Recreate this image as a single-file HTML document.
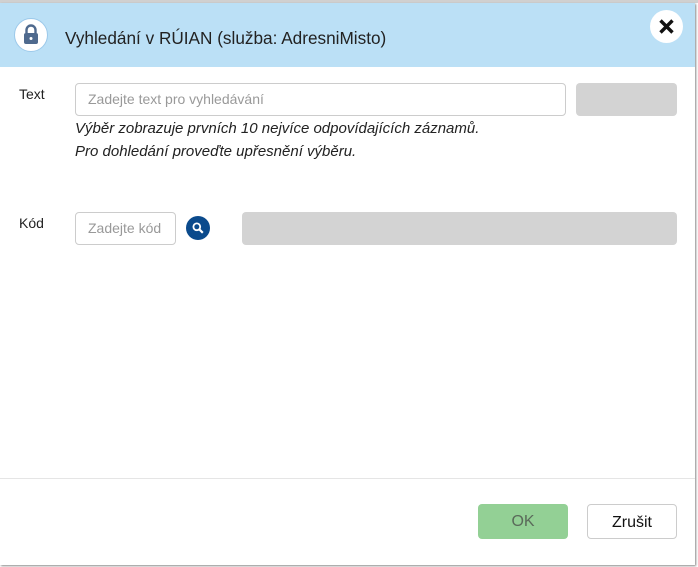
<!DOCTYPE html><html><head><meta charset="utf-8"><style>
*{box-sizing:border-box;margin:0;padding:0}
body{width:698px;height:567px;background:#fff;font-family:"Liberation Sans",sans-serif;position:relative;overflow:hidden}
.top{position:absolute;left:0;top:0;width:698px;height:3px;background:#d0d0d0}
.dlg{position:absolute;left:0;top:3px;width:695px;height:562px;background:#fff;box-shadow:1px 1px 2px #888;}
.hdr{position:absolute;left:0;top:0;width:695px;height:64px;background:#bbe0f6}
.lock{position:absolute;left:14px;top:15px;width:34px;height:34px;border-radius:50%;background:#fff;border:1px solid #9cc9ea}
.ttl{position:absolute;left:65px;top:25px;font-size:17.2px;color:#222}
.x{position:absolute;left:650px;top:7px;width:33px;height:33px;border-radius:50%;background:#fff}
.lbl{position:absolute;font-size:14px;color:#222}
.in{position:absolute;border:1px solid #ccc;border-radius:4px;background:#fff;font-size:14px;color:#999;padding-left:12px;line-height:31px}
.gray{position:absolute;background:#d3d3d3;border-radius:4px}
.it{position:absolute;left:75px;font-size:15px;font-style:italic;color:#222}
.sep{position:absolute;left:0;top:475px;width:695px;height:1px;background:#e5e5e5}
.btn{position:absolute;top:501px;height:35px;border-radius:4px;font-size:16px;text-align:center;line-height:35px}
</style></head><body>
<div class="top"></div>
<div class="dlg">
<div class="hdr">
<div class="lock"><svg width="34" height="34" viewBox="0 0 34 34" style="position:absolute;left:-1px;top:-1px"><path d="M12.5 15v-3a4.5 4.5 0 0 1 9 0v3" fill="none" stroke="#4f6a8e" stroke-width="2.4"/><rect x="10" y="15" width="14" height="11" rx="2" fill="#4f6a8e"/><circle cx="17" cy="20.5" r="1.5" fill="#fff"/></svg></div>
<div class="ttl">Vyhledání v RÚIAN (služba: AdresniMisto)</div>
<div class="x"><svg width="33" height="33" viewBox="0 0 33 33"><path d="M10.5 10.5l12 12M22.5 10.5l-12 12" stroke="#111" stroke-width="3.4"/></svg></div>
</div>
<div class="lbl" style="left:19px;top:83px">Text</div>
<div class="in" style="left:75px;top:80px;width:491px;height:33px">Zadejte text pro vyhledávání</div>
<div class="gray" style="left:576px;top:80px;width:101px;height:33px"></div>
<div class="it" style="top:117px">Výběr zobrazuje prvních 10 nejvíce odpovídajících záznamů.</div>
<div class="it" style="top:140px">Pro dohledání proveďte upřesnění výběru.</div>
<div class="lbl" style="left:19px;top:212px">Kód</div>
<div class="in" style="left:75px;top:209px;width:101px;height:33px">Zadejte kód</div>
<svg style="position:absolute;left:186px;top:213px" width="24" height="24" viewBox="0 0 24 24"><circle cx="12" cy="12" r="12" fill="#0b4a8c"/><circle cx="10.8" cy="10.8" r="3.4" fill="none" stroke="#fff" stroke-width="1.8"/><path d="M13.3 13.3l3.5 3.5" stroke="#fff" stroke-width="2.2"/></svg>
<div class="gray" style="left:242px;top:209px;width:435px;height:33px"></div>
<div class="sep"></div>
<div class="btn" style="left:478px;width:90px;background:#93d095;color:#5a6a5a">OK</div>
<div class="btn" style="left:587px;width:90px;border:1px solid #ccc;color:#111">Zrušit</div>
</div>
</body></html>
